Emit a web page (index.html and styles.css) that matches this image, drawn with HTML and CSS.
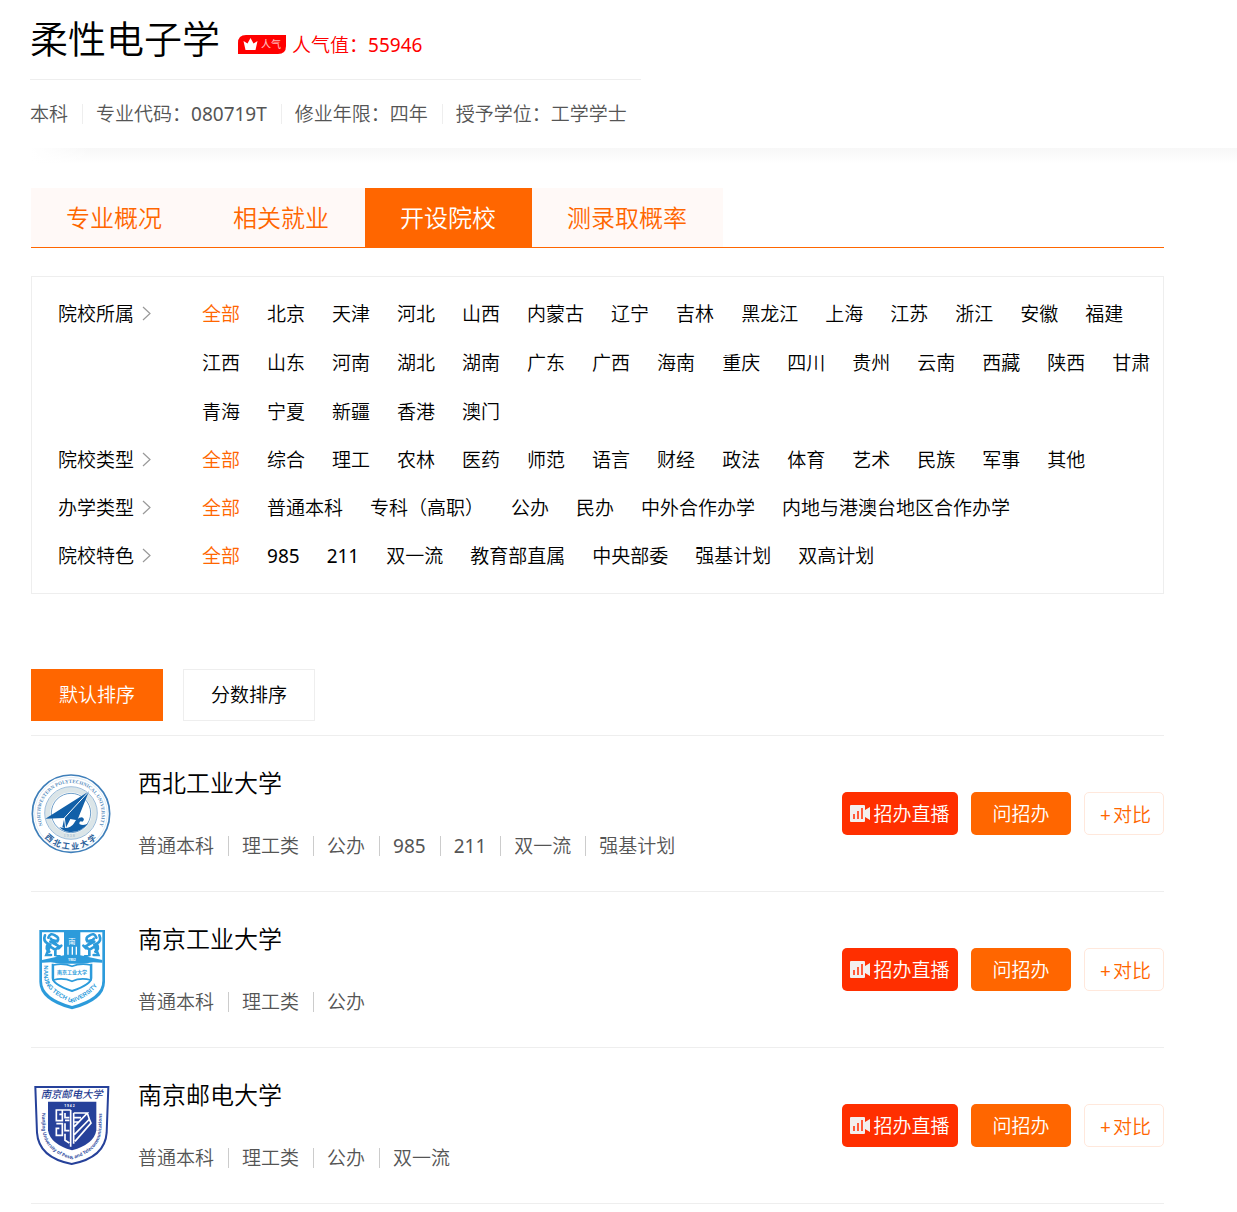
FILE: index.html
```html
<!DOCTYPE html>
<html lang="zh-CN">
<head>
<meta charset="utf-8">
<meta name="viewport" content="width=device-width, initial-scale=1">
<title>柔性电子学</title>
<link rel="stylesheet" href="styles.css">
</head>
<body>
<svg class="sprite" width="0" height="0" aria-hidden="true">
  <symbol id="live" viewBox="0 0 20 17">
    <path d="M1 0H14Q15 0 15 1V5L20 2V15L15 12V16Q15 17 14 17H1Q0 17 0 16V1Q0 0 1 0Z" fill="#f3efee"/>
    <path d="M4 9V14M8 6V14M12 3V14" stroke="#ff5a3a" stroke-width="2"/>
  </symbol>
  <symbol id="chevron" viewBox="0 0 9 15">
    <path d="M1 1L8 7.5L1 14" fill="none" stroke="#999" stroke-width="1.2"/>
  </symbol>
</svg>

<header class="major">
  <div class="major-title">
    <h1>柔性电子学</h1>
    <svg class="hot-badge" viewBox="0 0 48 19" role="img" aria-label="人气">
      <path d="M8 0H48V11Q48 19 40 19H0V8Q0 0 8 0Z" fill="#f00"/>
      <path d="M5.500 6L9.500 8.500L12.500 3L15.500 8.500L19.500 6L17.500 15H7.500Z" fill="#fff"/>
      <text x="23" y="13" font-size="10" font-weight="500" fill="#ffb3b3">人气</text>
    </svg>
    <span class="hot-value">人气值：<span class="num">55946</span></span>
  </div>
  <ul class="facts major-facts">
    <li>本科</li><li>专业代码：<span class="num">080719T</span></li><li>修业年限：四年</li><li>授予学位：工学学士</li>
  </ul>
</header>
<div class="header-shadow"></div>

<main class="content">
  <nav class="tabs">
    <a href="#overview">专业概况</a><a href="#jobs">相关就业</a><a href="#schools" class="active" aria-current="page">开设院校</a><a href="#chance">测录取概率</a>
  </nav>

  <section class="filters">
    <div class="filter">
      <h2>院校所属<svg class="chevron"><use href="#chevron"/></svg></h2>
      <div class="options"><a href="#" class="active">全部</a><a href="#">北京</a><a href="#">天津</a><a href="#">河北</a><a href="#">山西</a><a href="#">内蒙古</a><a href="#">辽宁</a><a href="#">吉林</a><a href="#">黑龙江</a><a href="#">上海</a><a href="#">江苏</a><a href="#">浙江</a><a href="#">安徽</a><a href="#">福建</a><a href="#">江西</a><a href="#">山东</a><a href="#">河南</a><a href="#">湖北</a><a href="#">湖南</a><a href="#">广东</a><a href="#">广西</a><a href="#">海南</a><a href="#">重庆</a><a href="#">四川</a><a href="#">贵州</a><a href="#">云南</a><a href="#">西藏</a><a href="#">陕西</a><a href="#">甘肃</a><a href="#">青海</a><a href="#">宁夏</a><a href="#">新疆</a><a href="#">香港</a><a href="#">澳门</a></div>
    </div>
    <div class="filter">
      <h2>院校类型<svg class="chevron"><use href="#chevron"/></svg></h2>
      <div class="options"><a href="#" class="active">全部</a><a href="#">综合</a><a href="#">理工</a><a href="#">农林</a><a href="#">医药</a><a href="#">师范</a><a href="#">语言</a><a href="#">财经</a><a href="#">政法</a><a href="#">体育</a><a href="#">艺术</a><a href="#">民族</a><a href="#">军事</a><a href="#">其他</a></div>
    </div>
    <div class="filter">
      <h2>办学类型<svg class="chevron"><use href="#chevron"/></svg></h2>
      <div class="options"><a href="#" class="active">全部</a><a href="#">普通本科</a><a href="#">专科（高职）</a><a href="#">公办</a><a href="#">民办</a><a href="#">中外合作办学</a><a href="#">内地与港澳台地区合作办学</a></div>
    </div>
    <div class="filter">
      <h2>院校特色<svg class="chevron"><use href="#chevron"/></svg></h2>
      <div class="options"><a href="#" class="active">全部</a><a href="#" class="num">985</a><a href="#" class="num">211</a><a href="#">双一流</a><a href="#">教育部直属</a><a href="#">中央部委</a><a href="#">强基计划</a><a href="#">双高计划</a></div>
    </div>
  </section>

  <div class="sorts">
    <button type="button" class="active">默认排序</button>
    <button type="button">分数排序</button>
  </div>

  <ul class="schools">
    <li class="school">
      <svg class="logo" viewBox="33 42 240 240" role="img" aria-label="西北工业大学校徽">
        <defs>
          <path id="npu-top" d="M68 196A92 92 0 1 1 238 196"/>
          <path id="npu-bottom" d="M62 216A107 107 0 0 0 245 216"/>
        </defs>
        <circle cx="153" cy="161" r="116" fill="#fff" stroke="#3f7fba" stroke-width="5"/>
        <circle cx="153" cy="161" r="109" fill="none" stroke="#a9c7e1" stroke-width="1"/>
        <text font-size="15" fill="#5d8fc0" font-weight="700" class="seal-serif"><textPath href="#npu-top">NORTHWESTERN POLYTECHNICAL UNIVERSITY</textPath></text>
        <circle cx="153" cy="159" r="70" fill="#fff" stroke="#dbe5e8" stroke-width="16"/>
        <circle cx="153" cy="159" r="79" fill="none" stroke="#6f9fca" stroke-width="2"/>
        <circle cx="153" cy="159" r="59" fill="none" stroke="#6f9fca" stroke-width="3"/>
        <path d="M76 176L207 94L172 181L151 177L137 205L127 202L133 174Z" fill="#1260a8"/>
        <path d="M207 94L133 174L137 205" fill="none" stroke="#fff" stroke-width="3"/>
        <path d="M118 202Q150 210 162 190Q170 173 186 172Q197 178 187 185Q177 181 178 192Q190 199 205 190Q181 219 148 216Q130 214 118 202Z" fill="#1260a8"/>
        <text x="131" y="231" font-size="12" fill="#8eabc4" class="seal-serif">1 9 3 8</text>
        <text font-size="24" font-weight="700" fill="#29609a"><textPath href="#npu-bottom" startOffset="20">西 北 工 业 大 学</textPath></text>
      </svg>
      <div class="info">
        <h3>西北工业大学</h3>
        <ul class="facts"><li>普通本科</li><li>理工类</li><li>公办</li><li class="num">985</li><li class="num">211</li><li>双一流</li><li>强基计划</li></ul>
      </div>
      <div class="actions">
        <button type="button" class="live"><svg><use href="#live"/></svg>招办直播</button>
        <button type="button" class="ask">问招办</button>
        <button type="button" class="compare"><span class="num">+</span>对比</button>
      </div>
    </li>
    <li class="school">
      <svg class="logo" viewBox="33 44 240 240" role="img" aria-label="南京工业大学校徽">
        <defs><path id="njtech-ring" d="M73 150V190Q78 231 156 263Q234 231 239 190V146"/></defs>
        <path d="M58 44H255V199Q255 256 156 282Q58 256 58 199Z" fill="#2c9bdb"/>
        <path d="M66 51H247V197Q247 247 156 272Q66 247 66 197Z" fill="#fff"/>
        <path d="M132 50H181V120L247 134V142L220 141L156 150L92 141L66 142V134L132 120Z" fill="#2c9bdb"/>
        <path d="M98 145V188Q98 207 156 227Q214 207 214 188V145" fill="#fff" stroke="#2c9bdb" stroke-width="6"/>
        <g fill="none" stroke="#2c9bdb" stroke-width="8" stroke-linecap="round">
          <path d="M75 60Q68 78 84 85Q75 101 88 109M85 67Q91 50 106 61Q119 66 112 78L99 75M91 79L119 94L105 103L88 92M106 104V119L119 123M91 88L79 119H93M116 99L124 91"/>
          <path d="M238 60Q246 78 230 85Q239 101 226 109M229 67Q223 50 208 61Q195 66 202 78L215 75M223 79L195 94L209 103L226 92M208 104V119L195 123M223 88L235 119H221M198 99L190 91"/>
          <path d="M92 70L108 86M222 70L206 86"/>
        </g>
        <circle cx="102" cy="68" r="2" fill="#fff"/><circle cx="212" cy="68" r="2" fill="#fff"/>
        <path d="M144 94V118M157 94V118M169 94V118" stroke="#fff" stroke-width="4"/>
        <text x="145" y="87" font-size="22" fill="#fff">南</text>
        <text x="144" y="137" font-size="10" font-weight="700" fill="#fff">1902</text>
        <path d="M100 149Q130 142 156 153Q182 142 212 149V194Q182 186 156 198Q130 186 100 194Z" fill="#fff" stroke="#2c9bdb" stroke-width="5"/>
        <text x="111" y="177" font-size="15" font-weight="700" fill="#2c9bdb">南京工业大学</text>
        <text font-size="18" font-weight="700" fill="#2c9bdb" class="seal-sans"><textPath href="#njtech-ring">NANJING TECH  UNIVERSITY</textPath></text>
      </svg>
      <div class="info">
        <h3>南京工业大学</h3>
        <ul class="facts"><li>普通本科</li><li>理工类</li><li>公办</li></ul>
      </div>
      <div class="actions">
        <button type="button" class="live"><svg><use href="#live"/></svg>招办直播</button>
        <button type="button" class="ask">问招办</button>
        <button type="button" class="compare"><span class="num">+</span>对比</button>
      </div>
    </li>
    <li class="school">
      <svg class="logo" viewBox="33 47 240 240" role="img" aria-label="南京邮电大学校徽">
        <defs><path id="njupt-ring" d="M66 128L67 177Q72 244 155 267Q240 244 244 177L246 122"/></defs>
        <path d="M46 50H265L260 187Q255 262 155 281Q56 262 51 187Z" fill="#fff" stroke="#26419a" stroke-width="6"/>
        <text x="62" y="84" font-size="31" font-weight="500" fill="#1f3b91" class="script">南京邮电大学</text>
        <path d="M84 94H229V180Q222 222 156 240Q91 222 84 180Z" fill="#26419a"/>
        <text x="133" y="109" font-size="10" font-weight="700" fill="#fff">1 9 4 2</text>
        <g fill="none" stroke="#fff" stroke-width="5">
          <path d="M152 119H109V151H127V132H118M127 132V119M109 160H127V195H109V174H118M152 119V229M135 128V142H148M135 150H148M135 159V181H148M135 190V210L148 218"/>
          <path d="M161 128H202L163 169M161 142H183M161 155H177M202 128L208 147L163 193M208 147L213 158L165 213M161 128V220"/>
        </g>
        <text font-size="14" font-weight="700" fill="#3450a2"><textPath href="#njupt-ring">Nanjing University of Posts and Telecommunications</textPath></text>
      </svg>
      <div class="info">
        <h3>南京邮电大学</h3>
        <ul class="facts"><li>普通本科</li><li>理工类</li><li>公办</li><li>双一流</li></ul>
      </div>
      <div class="actions">
        <button type="button" class="live"><svg><use href="#live"/></svg>招办直播</button>
        <button type="button" class="ask">问招办</button>
        <button type="button" class="compare"><span class="num">+</span>对比</button>
      </div>
    </li>
  </ul>
</main>
</body>
</html>
```
FILE: styles.css
```css
* { box-sizing: border-box; }

body {
  margin: 0;
  background: #fff;
  color: #000;
  font: 350 19px/28px "Noto Sans", "Noto Sans CJK SC", sans-serif;
}

h1, h2, h3, ul { margin: 0; padding: 0; font-weight: inherit; list-style: none; }
a { color: inherit; text-decoration: none; }
button { font: inherit; cursor: pointer; }
.sprite { display: block; height: 0; }
.num { font-weight: 400; }

.major { padding-left: 30px; }
.major-title {
  display: flex;
  align-items: center;
  max-width: 611px;
  height: 80px;
  padding-bottom: 3px;
  border-bottom: 1px solid #eee;
}
.major-title h1 { font-size: 38px; line-height: 56px; }
.hot-badge { width: 48px; height: 19px; margin: 12px 6px 0 18px; }
.hot-value { margin-top: 13px; color: #f00; }

.facts { display: flex; flex-wrap: wrap; color: #555; line-height: 20px; }
.facts li { padding-right: 14px; }
.facts li + li { padding-left: 13px; border-left: 1px solid #ccc; }
.major-facts { padding: 24px 0; }
.major-facts li + li { border-color: #eee; }

.header-shadow {
  height: 16px;
  margin-left: 31px;
  background: linear-gradient(to right, #fff, transparent 60px), linear-gradient(#f7f7f7, #fff);
}

.content { margin: 24px 73px 0 31px; }

.tabs { display: flex; border-bottom: 1px solid #f60; font-size: 24px; line-height: 59px; }
.tabs a { padding: 0 36px 0 35px; background: #fff9f7; color: #f60; }
.tabs .active { background: #f60; color: #fff; }

.filters { margin-top: 28px; padding: 13px 0 13px 26px; border: 1px solid #eee; }
.filter { display: flex; line-height: 48px; }
.filter h2 { flex: 0 0 144px; font-size: 19px; }
.chevron { width: 9px; height: 15px; margin-left: 8px; }
.options { display: flex; flex-wrap: wrap; gap: 1px 27px; }
.options .active { color: #f60; }

.sorts { display: flex; gap: 20px; margin-top: 75px; padding-bottom: 14px; border-bottom: 1px solid #eee; }
.sorts button { width: 132px; height: 52px; padding: 0; border: 1px solid #eee; background: #fff; color: #000; }
.sorts .active { border-color: #f60; background: #f60; color: #fff; }

.school { display: flex; align-items: center; border-bottom: 1px solid #eee; }
.logo { width: 80px; height: 80px; margin-right: 27px; }
.info { flex: 1; padding: 31px 0 35px; }
.info h3 { margin-bottom: 37px; font-size: 24px; line-height: 32px; }
.seal-serif { font-family: "Liberation Serif", serif; }
.seal-sans { font-family: "Liberation Sans", sans-serif; }
.script { font-family: "Noto Sans CJK SC", sans-serif; font-style: italic; }

.actions { display: flex; gap: 13px; }
.actions button {
  display: flex;
  align-items: center;
  justify-content: center;
  height: 43px;
  padding: 0;
  border: 0;
  border-radius: 5px;
  color: #fff;
}
.actions .live { width: 116px; gap: 3px; background: #ff2f00; }
.live svg { width: 20px; height: 17px; }
.actions .ask { width: 100px; background: #f60; }
.actions .compare { width: 80px; padding: 2px 0 0 3px; gap: 2px; border: 1px solid #ffe8dc; background: #fff; color: #f60; }
```
